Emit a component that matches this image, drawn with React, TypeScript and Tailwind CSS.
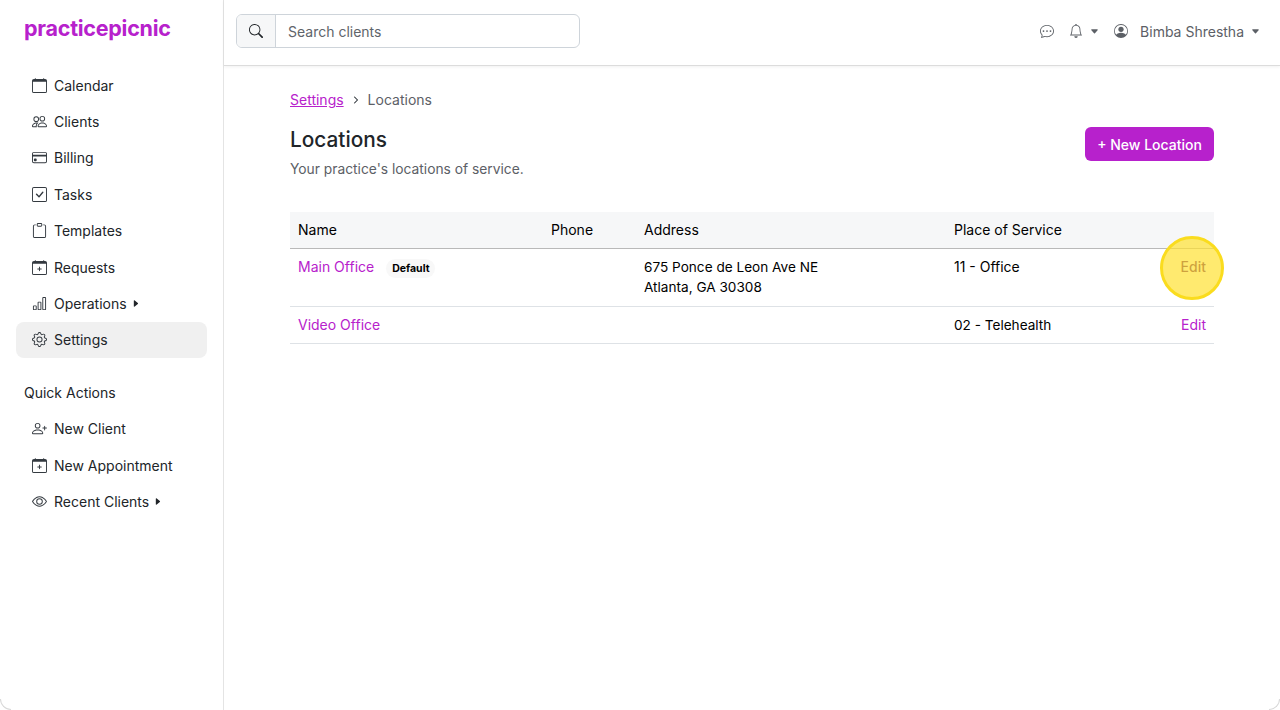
import {
  BsBarChart,
  BsBell,
  BsCalendar,
  BsCalendarPlus,
  BsCaretDownFill,
  BsCaretRightFill,
  BsChatDots,
  BsCheckSquare,
  BsChevronRight,
  BsClipboard,
  BsCreditCard,
  BsEye,
  BsGear,
  BsPeople,
  BsPersonCircle,
  BsPersonPlus,
  BsSearch,
} from "react-icons/bs"

const NAV_ITEMS = [
  { label: "Calendar", icon: BsCalendar },
  { label: "Clients", icon: BsPeople },
  { label: "Billing", icon: BsCreditCard },
  { label: "Tasks", icon: BsCheckSquare },
  { label: "Templates", icon: BsClipboard },
  { label: "Requests", icon: BsCalendarPlus },
  { label: "Operations", icon: BsBarChart, caret: true },
  { label: "Settings", icon: BsGear, active: true },
]

const QUICK_ACTIONS = [
  { label: "New Client", icon: BsPersonPlus },
  { label: "New Appointment", icon: BsCalendarPlus },
  { label: "Recent Clients", icon: BsEye, caret: true },
]

type NavItemProps = {
  label: string
  icon: typeof BsGear
  caret?: boolean
  active?: boolean
}

function NavItem({ label, icon: Icon, caret, active }: NavItemProps) {
  return (
    <a
      href="#"
      className={`flex h-[36.4px] items-center rounded-lg pl-4 text-[14px] text-[#212529] ${active ? "bg-[#f0f0f0]" : ""}`}
    >
      <Icon className="mr-[7px] size-[15px] shrink-0 text-[#343a40]" />
      <span>{label}</span>
      {caret && <BsCaretRightFill className="ml-[4px] size-[9px] text-[#212529]" />}
    </a>
  )
}

function Sidebar() {
  return (
    <aside className="flex w-[224px] shrink-0 flex-col border-r border-[#e4e4e4] bg-white">
      <div className="pl-6 pt-[13px] text-[21.5px] font-bold leading-[30px] tracking-[-0.25px] text-[#b721cc]">
        practicepicnic
      </div>
      <nav className="mt-[24px] flex flex-col px-4">
        {NAV_ITEMS.map((item) => (
          <NavItem key={item.label} {...item} />
        ))}
      </nav>
      <div className="mt-[25px] pl-6 text-[14px] leading-5 text-[#212529]">Quick Actions</div>
      <nav className="mt-[7.3px] flex flex-col px-4">
        {QUICK_ACTIONS.map((item) => (
          <NavItem key={item.label} {...item} />
        ))}
      </nav>
    </aside>
  )
}

function TopBar() {
  return (
    <header className="flex h-[66px] shrink-0 items-center justify-between border-b border-[#dcdcdc] bg-white pb-[3px] pl-3 pr-5 shadow-[0_1px_3px_rgba(0,0,0,0.06)]">
      <div className="flex h-[34px] w-[344px] overflow-hidden rounded-md border border-[#ced4da]">
        <div className="flex w-[39px] items-center justify-center border-r border-[#ced4da] bg-[#f6f7f8]">
          <BsSearch className="size-[14px] text-[#212529]" />
        </div>
        <div className="flex flex-1 items-center pl-3 text-[14px] text-[#60646a]">Search clients</div>
      </div>
      <div className="flex items-center text-[#5c6066]">
        <BsChatDots className="size-[14px]" />
        <BsBell className="ml-[15px] size-[14px]" />
        <BsCaretDownFill className="ml-[7px] size-[9px]" />
        <BsPersonCircle className="ml-[15px] size-[14px]" />
        <span className="ml-[12px] text-[14px]">Bimba Shrestha</span>
        <BsCaretDownFill className="ml-[7px] size-[9px]" />
      </div>
    </header>
  )
}

function LocationsTable() {
  return (
    <table className="mt-[33px] w-full table-fixed border-collapse text-[14px] text-black">
      <colgroup>
        <col className="w-[253px]" />
        <col className="w-[93px]" />
        <col className="w-[310px]" />
        <col />
        <col className="w-[80px]" />
      </colgroup>
      <thead>
        <tr className="h-[36px] border-b border-[#b9b9b9] bg-[#f6f7f8] text-left">
          <th className="px-2 font-normal">Name</th>
          <th className="px-2 font-normal">Phone</th>
          <th className="px-2 font-normal">Address</th>
          <th className="px-2 font-normal">Place of Service</th>
          <th />
        </tr>
      </thead>
      <tbody>
        <tr className="h-[58px] border-b border-[#dee2e6] align-top">
          <td className="px-2 pt-2 leading-5">
            <a href="#" className="text-[#b721cc]">Main Office</a>
            <span className="ml-3 mt-[2px] inline-block rounded-full bg-[#f8f8f8] px-[6px] py-[3px] align-middle text-[10.5px] font-bold leading-[13px]">
              Default
            </span>
          </td>
          <td />
          <td className="px-2 pt-2 text-[13.6px] leading-5">
            675 Ponce de Leon Ave NE
            <br />
            Atlanta, GA 30308
          </td>
          <td className="px-2 pt-2 leading-5">11 - Office</td>
          <td className="px-2 pt-2 text-right leading-5">
            <a href="#" className="font-medium text-[#5a0a60]">Edit</a>
          </td>
        </tr>
        <tr className="h-[37px] border-b border-[#dee2e6]">
          <td className="px-2">
            <a href="#" className="text-[#b721cc]">Video Office</a>
          </td>
          <td />
          <td />
          <td className="px-2 pt-[1px] text-[13.6px]">02 - Telehealth</td>
          <td className="px-2 text-right">
            <a href="#" className="text-[#b721cc]">Edit</a>
          </td>
        </tr>
      </tbody>
    </table>
  )
}

export default function App() {
  return (
    <div className="relative flex h-[710px] overflow-hidden bg-white font-['Inter','Liberation_Sans',sans-serif]">
      <Sidebar />
      <div className="flex min-w-0 flex-1 flex-col">
        <TopBar />
        <main className="px-[66px] pt-[24px]">
          <div className="flex items-center text-[14px] leading-5">
            <a href="#" className="text-[#b721cc] underline">Settings</a>
            <BsChevronRight className="mx-[8px] size-[8px] stroke-1 text-[#343a40]" />
            <span className="text-[#5c6066]">Locations</span>
          </div>
          <div className="mt-[16px] flex items-start justify-between">
            <div>
              <h1 className="text-[20.8px] font-medium leading-7 text-[#212529]">Locations</h1>
              <p className="mt-[5px] text-[13.8px] leading-5 text-[#5c6066]">Your practice's locations of service.</p>
            </div>
            <button className="mt-[1px] h-[34px] w-[129px] rounded-md bg-[#b721cc] text-[14px] font-medium text-white">
              + New Location
            </button>
          </div>
          <LocationsTable />
        </main>
      </div>
      <div className="absolute left-[1160px] top-[236px] size-[64px] rounded-full border-[3px] border-[#fadc1e] bg-[#ffe132]/70" />
      <div className="absolute bottom-0 left-0 size-[11px] rounded-bl-[11px] border-b border-l border-[#d8d8d8]" />
      <div className="absolute bottom-0 right-0 size-[11px] rounded-br-[11px] border-b border-r border-[#d8d8d8]" />
    </div>
  )
}
